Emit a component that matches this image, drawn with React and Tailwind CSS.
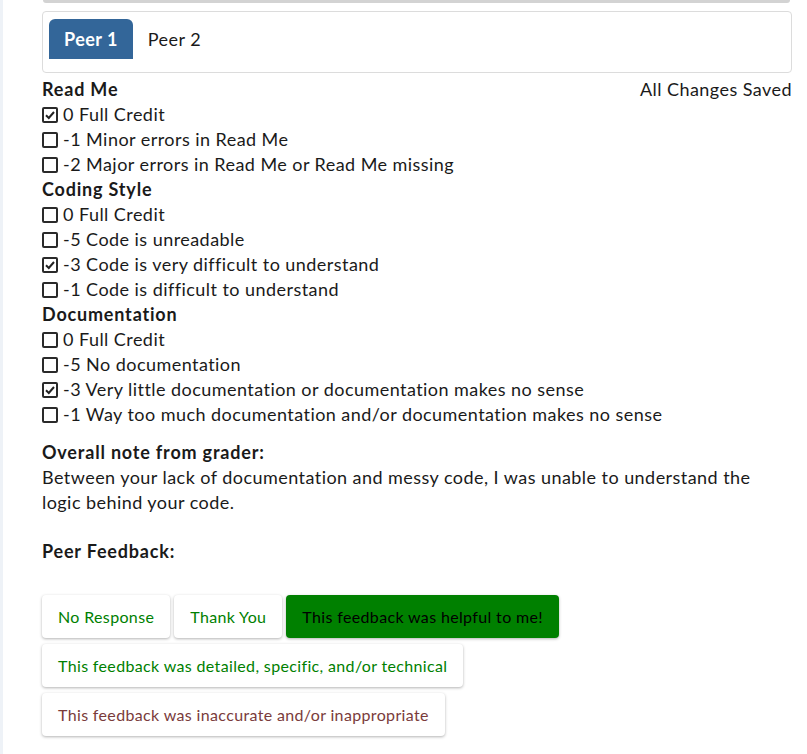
const rubric = [
  {
    title: 'Read Me',
    items: [
      { label: '0 Full Credit', checked: true },
      { label: '-1 Minor errors in Read Me' },
      { label: '-2 Major errors in Read Me or Read Me missing' },
    ],
  },
  {
    title: 'Coding Style',
    items: [
      { label: '0 Full Credit' },
      { label: '-5 Code is unreadable' },
      { label: '-3 Code is very difficult to understand', checked: true },
      { label: '-1 Code is difficult to understand' },
    ],
  },
  {
    title: 'Documentation',
    items: [
      { label: '0 Full Credit' },
      { label: '-5 No documentation' },
      { label: '-3 Very little documentation or documentation makes no sense', checked: true },
      { label: '-1 Way too much documentation and/or documentation makes no sense' },
    ],
  },
];

const Box = ({ checked }) => (
  <span className="w-4 h-4 border-2 border-[#2a2a2a] rounded-[2px] flex items-center justify-center shrink-0 bg-white">
    {checked && (
      <svg width="12" height="12" viewBox="0 0 12 12">
        <path d="M2 6.2 L4.8 9 L10 3" fill="none" stroke="#222" strokeWidth="2" />
      </svg>
    )}
  </span>
);

const btn = 'h-[43px] px-[16px] rounded-[4px] shadow-[0_1px_3px_rgba(0,0,0,0.3)]';

const App = () => {
  return (
    <div className="min-h-[754px] bg-white flex text-[#1a1a1a] text-[18px] leading-[25px] tracking-[0.025em]" style={{ fontFamily: 'Lato, sans-serif' }}>
      <div className="w-[3px] bg-[#eef2f7] shrink-0"></div>
      <div className="flex-1 pl-[39px] pr-[15px]">
        <div className="h-[3px] bg-[#d3d3d3] rounded-b-[3px] mr-[2px] ml-[1px]"></div>

        <div className="mt-[8px] border border-[#dcdcdc] rounded-[4px] pl-[6px] pt-[7px] pb-[13px] flex">
          <button className="bg-[#336699] text-white font-bold px-[15px] h-[40px] rounded-t-[6px]">Peer 1</button>
          <button className="px-[15px] h-[40px]">Peer 2</button>
        </div>

        <div className="mt-[4px]">
          {rubric.map((section, i) => (
            <div key={section.title}>
              <div className="flex justify-between">
                <span className="font-bold tracking-[0.045em]">{section.title}</span>
                {i === 0 && <span>All Changes Saved</span>}
              </div>
              {section.items.map((item) => (
                <label key={item.label} className="flex items-center gap-[5px]">
                  <Box checked={item.checked} />
                  <span>{item.label}</span>
                </label>
              ))}
            </div>
          ))}
        </div>

        <div className="mt-[13px]">
          <div className="font-bold tracking-[0.045em]">Overall note from grader:</div>
          <p>
            Between your lack of documentation and messy code, I was unable to understand the logic behind your code.
          </p>
        </div>

        <div className="mt-[24px] font-bold tracking-[0.045em]">Peer Feedback:</div>

        <div className="mt-[31px] flex flex-col gap-[6px] items-start text-[16px] tracking-[0.022em]">
          <div className="flex gap-[4px]">
            <button className={`${btn} bg-white text-[#008000]`}>No Response</button>
            <button className={`${btn} bg-white text-[#008000]`}>Thank You</button>
            <button className={`${btn} bg-[#008000] text-black`}>This feedback was helpful to me!</button>
          </div>
          <button className={`${btn} bg-white text-[#008000]`}>This feedback was detailed, specific, and/or technical</button>
          <button className={`${btn} bg-white text-[#7a3b3b]`}>This feedback was inaccurate and/or inappropriate</button>
        </div>
      </div>
    </div>
  );
};

export default App;
